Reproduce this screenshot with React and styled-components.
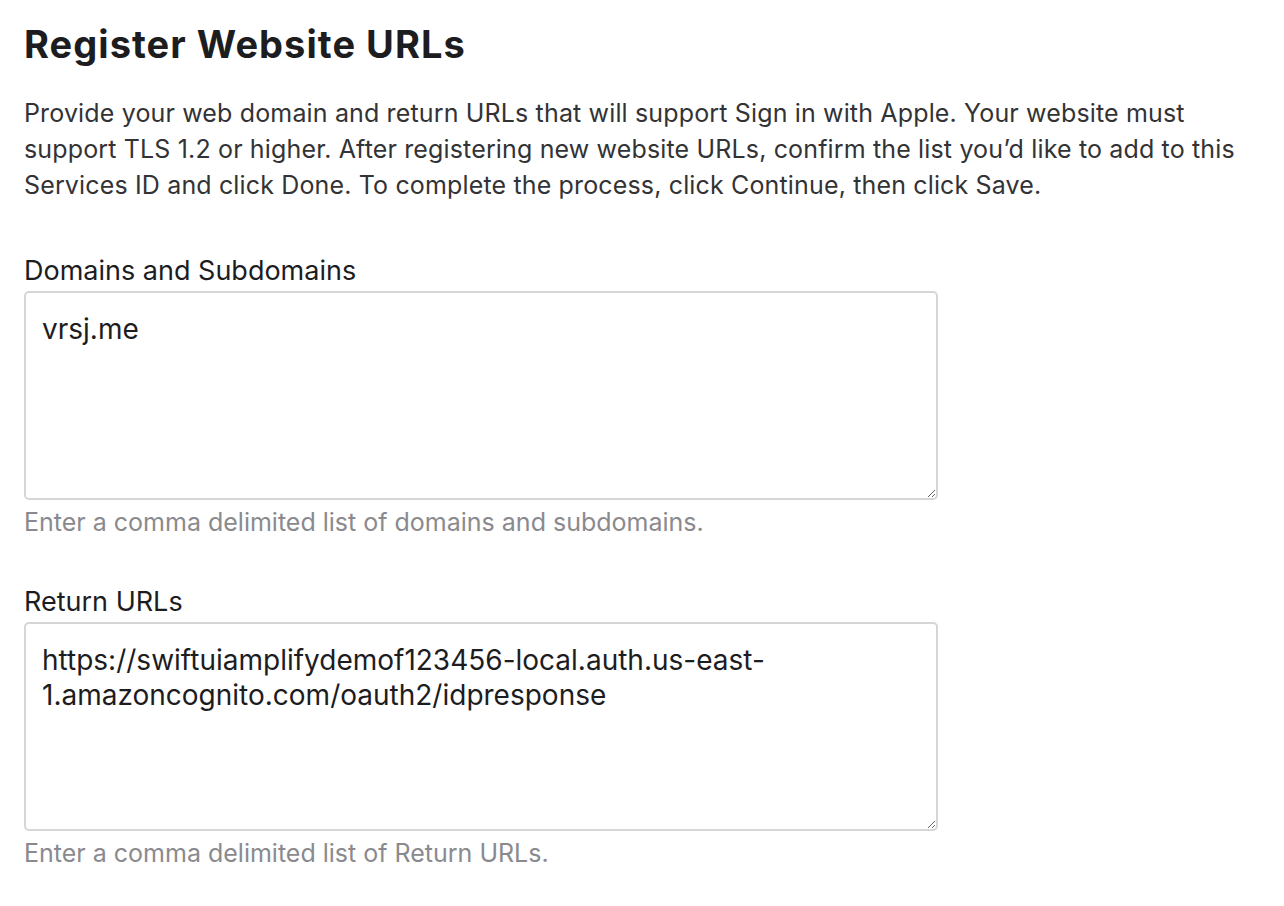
import React from "react";
import styled, { createGlobalStyle } from "styled-components";

const Global = createGlobalStyle`
  html, body { margin: 0; padding: 0; background: #fff; }
  body { font-family: Inter, "Noto Sans", "Liberation Sans", sans-serif; -webkit-font-smoothing: antialiased; }
`;

const Page = styled.main`
  padding: 21px 24px 24px 24px;
  box-sizing: border-box;
  width: 1284px;
`;

const Title = styled.h1`
  margin: 0;
  font-size: 38px;
  line-height: 46px;
  font-weight: 700;
  color: #1d1d1f;
  letter-spacing: 1.05px;
`;

const Intro = styled.p`
  margin: 28px 0 0 0;
  font-size: 25px;
  line-height: 36px;
  letter-spacing: 0.15px;
  color: #333336;
  max-width: 1222px;
`;

const Field = styled.section`
  display: flex;
  flex-direction: column;
  margin-top: ${(p) => p.$top}px;
`;

const Label = styled.label`
  font-size: 27px;
  line-height: 32px;
  color: #1d1d1f;
  margin-bottom: 4px;
`;

const Area = styled.textarea`
  width: 914px;
  height: 209px;
  box-sizing: border-box;
  border: 2px solid #d6d6d6;
  border-radius: 5px;
  padding: 19px 16px 17px 16px;
  font-family: Inter, "Noto Sans", "Liberation Sans", sans-serif;
  font-size: 28px;
  line-height: 35px;
  color: #1d1d1f;
  outline: none;
  resize: vertical;
`;

const Help = styled.div`
  font-size: 25px;
  line-height: 30px;
  color: #8a8a8e;
  margin-top: 7px;
`;

export default function App() {
  return (
    <Page>
      <Global />
      <Title>Register Website URLs</Title>
      <Intro>
        Provide your web domain and return URLs that will support Sign in with Apple. Your website must
        support TLS 1.2 or higher. After registering new website URLs, confirm the list you’d like to add to this
        Services ID and click Done. To complete the process, click Continue, then click Save.
      </Intro>
      <Field $top={52}>
        <Label>Domains and Subdomains</Label>
        <Area defaultValue="vrsj.me" spellCheck={false} />
        <Help>Enter a comma delimited list of domains and subdomains.</Help>
      </Field>
      <Field $top={49}>
        <Label>Return URLs</Label>
        <Area
          defaultValue="https://swiftuiamplifydemof123456-local.auth.us-east-1.amazoncognito.com/oauth2/idpresponse"
          spellCheck={false}
        />
        <Help>Enter a comma delimited list of Return URLs.</Help>
      </Field>
    </Page>
  );
}
